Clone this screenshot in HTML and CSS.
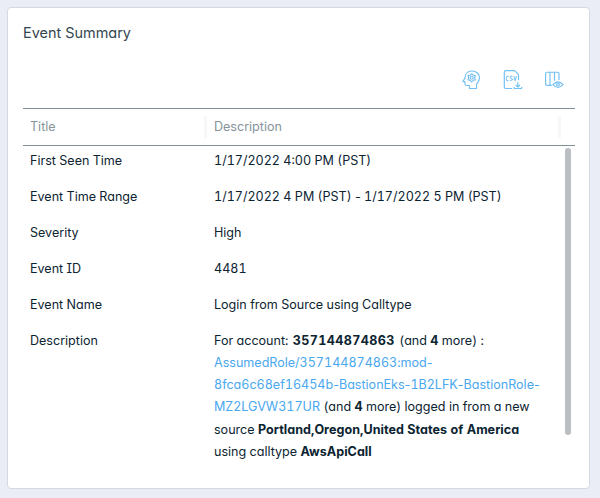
FILE: index.html
```html
<!DOCTYPE html>
<html lang="en">
<head>
<meta charset="utf-8">
<title>Event Summary</title>
<link rel="stylesheet" href="styles.css">
</head>
<body>
<main class="card">
  <h1 class="heading">Event Summary</h1>
  <div class="toolbar">
    <svg class="icon" viewBox="0 0 20 20"><path d="M7.5 18.5V15.5H4.2Q3 15.5 3 14.3V11.9L.9 11.4 2.8 8.5C2.8 4.1 5.6 1 9.9 1C14.4 1 17.5 4 17.5 8.1C17.5 11 15.9 12.5 14.5 14.2V18.5Z"/><path d="M9.7 3.7 11.2 5.1 13.3 5.5 12.7 7.6 13.3 9.9 11.2 10.3 9.7 11.8 8.2 10.3 6.1 9.9 6.7 7.6 6.1 5.5 8.2 5.1Z"/><circle cx="9.7" cy="7.7" r="1.5"/></svg>
    <svg class="icon" viewBox="0 0 20 20"><path d="M9 18.5H2.7Q1.3 18.5 1.3 17V2Q1.3.6 2.7.6H11.7L15.5 4.6V10.2M14.8 12.2V17M12.7 15 14.8 17.1 16.9 15M11.1 17V18.5H18.6V17"/><path class="letters" d="M5.6 6.3Q3.1 5.5 3.1 8.5T5.6 10.7M9.4 6.3Q7.2 5.7 7.2 7.2T9.3 9 7.1 10.7M10.9 6 12.2 10.8 13.5 6"/></svg>
    <svg class="icon" viewBox="0 0 20 20"><path d="M7.8 15.3H3Q1.6 15.3 1.6 13.9V3.6Q1.6 2.2 3 2.2H13.6Q15 2.2 15 3.6V9.9M6 2.2V15.3M10.5 2.2V10.7M8.9 14.7Q14 8.9 19.1 14.7Q14 20.2 8.9 14.7Z"/><circle cx="14" cy="14.6" r="1.4"/></svg>
  </div>
  <section class="table">
    <header class="row head"><div>Title</div><div>Description</div></header>
    <div class="body">
      <div class="row"><div class="alt">First Seen Time</div><div class="value">1/17/2022 4:00 PM (PST)</div></div>
      <div class="row"><div class="alt">Event Time Range</div><div class="value">1/17/2022 4 PM (PST) <span class="dash">-</span> 1/17/2022 5 PM (PST)</div></div>
      <div class="row"><div class="alt">Severity</div><div class="value">High</div></div>
      <div class="row"><div class="alt">Event ID</div><div class="value">4481</div></div>
      <div class="row"><div class="alt">Event Name</div><div class="alt">Login from Source using Calltype</div></div>
      <div class="row"><div class="alt">Description</div><div class="alt">
        For account: <b class="account">357144874863</b> (and <b>4</b> more) :<br>
        <a>AssumedRole/357144874863:mod<span class="dash">-</span></a><br>
        <a>8fca6c68ef16454b<span class="dash">-</span>BastionEks<span class="dash">-</span>1B2LFK<span class="dash">-</span>BastionRole<span class="dash">-</span></a><br>
        <a>MZ2LGVW317UR</a> (and <b>4</b> more) logged in from a new
        <div class="source">source <b>Portland,Oregon,United States of America</b><br>
        using calltype <b>AwsApiCall</b></div>
      </div></div>
      <i class="thumb"></i>
    </div>
  </section>
</main>
</body>
</html>
```
FILE: styles.css
```css
* { box-sizing: border-box; }
body { margin: 0; height: 498px; padding: 7px 10px 9px 7px; background: #eaedf6; font-family: Inter, sans-serif; font-size: 12.55px; color: #0c2431; }
.card { height: 482px; padding: 15px 14px 0 15px; background: #fff; border: 1px solid #d6d8df; border-radius: 4px; }
.heading { margin: 0; font-size: 14.45px; font-weight: 400; line-height: 20px; color: #334650; font-feature-settings: "cv11", "cv08"; }
.toolbar { display: flex; justify-content: flex-end; gap: 21px; height: 65px; padding: 27px 11px 0 0; }
.icon { width: 20px; height: 20px; fill: none; stroke: #72c0f4; stroke-width: 1.15; stroke-linejoin: round; }
.letters { stroke-width: 1; }
.table { border-top: 1px solid #81919a; }
.row { display: grid; grid-template-columns: 184px 345px; padding-left: 7px; line-height: 22px; min-height: 36px; }
.head { position: relative; height: 37px; padding-top: 7px; border-bottom: 1px solid #81919a; color: #86939a; }
.head::before, .head::after { content: ""; position: absolute; top: 7px; left: 181px; width: 3px; height: 22px; background: #f7f7f7; }
.head::after { left: 535px; }
.body { position: relative; padding-top: 4px; }
.alt { font-feature-settings: "cv11", "cv08", "tnum"; }
.value { font-feature-settings: "tnum"; }
.dash { font-feature-settings: "tnum" 0; }
.source { padding-top: 1px; }
.source b { letter-spacing: .04px; }
.account { margin: 0 1px; letter-spacing: .4px; }
a { color: #4aa8ef; }
b { font-weight: 700; }
.thumb { position: absolute; top: 2px; left: 542px; width: 6px; height: 287px; border-radius: 3px; background: #babfc3; }
```
